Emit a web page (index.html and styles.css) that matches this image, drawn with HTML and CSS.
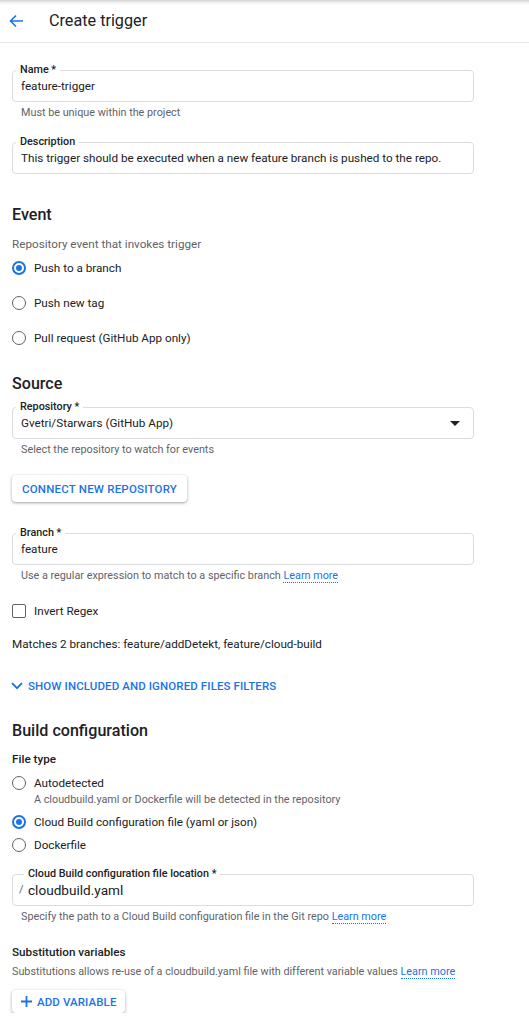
FILE: index.html
```html
<!DOCTYPE html>
<html lang="en">
<head>
<meta charset="utf-8">
<title>Create trigger</title>
<link rel="stylesheet" href="styles.css">
</head>
<body>
<header class="header">
  <svg class="back" viewBox="0 0 16 16" width="16" height="16" aria-hidden="true"><path d="M15 8H2.5M8 2.5 2.5 8 8 13.5" fill="none" stroke="#1a73e8" stroke-width="1.6"/></svg>
  <h1 class="title">Create trigger</h1>
</header>
<main class="form">
  <fieldset class="field f-name">
    <legend class="field-label">Name *</legend>
    <div class="field-value">feature-trigger</div>
  </fieldset>
  <div class="helper">Must be unique within the project</div>

  <fieldset class="field f-desc">
    <legend class="field-label">Description</legend>
    <div class="field-value">This trigger should be executed when a new feature branch is pushed to the repo.</div>
  </fieldset>

  <h2 class="section h-event">Event</h2>
  <p class="desc d-event">Repository event that invokes trigger</p>
  <div class="radio-list">
    <div class="radio-row"><span class="radio on"></span>Push to a branch</div>
    <div class="radio-row"><span class="radio"></span>Push new tag</div>
    <div class="radio-row"><span class="radio"></span>Pull request (GitHub App only)</div>
  </div>

  <h2 class="section h-source">Source</h2>
  <fieldset class="field f-repo">
    <legend class="field-label">Repository *</legend>
    <div class="field-value select">Gvetri/Starwars (GitHub App)<span class="caret"></span></div>
  </fieldset>
  <div class="helper">Select the repository to watch for events</div>
  <button class="btn btn-connect" type="button">CONNECT NEW REPOSITORY</button>

  <fieldset class="field f-branch">
    <legend class="field-label">Branch *</legend>
    <div class="field-value">feature</div>
  </fieldset>
  <div class="helper">Use a regular expression to match to a specific branch <a class="link" href="#">Learn more</a></div>
  <div class="check-row"><span class="checkbox"></span>Invert Regex</div>
  <p class="matches">Matches 2 branches: feature/addDetekt, feature/cloud-build</p>
  <div class="toggle">
    <svg class="chev" viewBox="0 0 12 8" width="12" height="8" aria-hidden="true"><path d="M1 1.2 6 6.2 11 1.2" fill="none" stroke="#1a73e8" stroke-width="1.9"/></svg>
    SHOW INCLUDED AND IGNORED FILES FILTERS
  </div>

  <h2 class="section h-build">Build configuration</h2>
  <div class="subhead h-filetype">File type</div>
  <div class="radio-row r-auto"><span class="radio"></span>Autodetected</div>
  <div class="radio-sub">A cloudbuild.yaml or Dockerfile will be detected in the repository</div>
  <div class="radio-row r-cloud"><span class="radio on"></span>Cloud Build configuration file (yaml or json)</div>
  <div class="radio-row r-docker"><span class="radio"></span>Dockerfile</div>

  <fieldset class="field f-loc">
    <legend class="field-label">Cloud Build configuration file location *</legend>
    <div class="field-value path"><span class="slash">/</span><span class="path-text">cloudbuild.yaml</span></div>
  </fieldset>
  <div class="helper">Specify the path to a Cloud Build configuration file in the Git repo <a class="link" href="#">Learn more</a></div>

  <div class="subhead h-subst">Substitution variables</div>
  <p class="desc d-subst">Substitutions allows re-use of a cloudbuild.yaml file with different variable values <a class="link" href="#">Learn more</a></p>
  <button class="btn btn-add" type="button">
    <svg class="plus" viewBox="0 0 11 11" width="11" height="11" aria-hidden="true"><path d="M5.5 0v11M0 5.5h11" stroke="#1a73e8" stroke-width="1.8"/></svg>
    ADD VARIABLE
  </button>
</main>
</body>
</html>
```

FILE: styles.css
```css
* { box-sizing: border-box; }

body {
  margin: 0;
  font-family: Roboto, "Noto Sans", "Liberation Sans", sans-serif;
  color: #202124;
  background: #fff;
}

.header {
  height: 43px;
  display: flex;
  align-items: center;
  padding-left: 8px;
  gap: 25px;
  border-bottom: 1px solid #e8e8e8;
  background: linear-gradient(to bottom, #d4d4d4 0, #f4f4f4 3px, #fff 5px);
}

.back { display: block; }

.title {
  margin: 0;
  font-size: 16.2px;
  font-weight: 400;
  line-height: 24px;
}

.form {
  width: 474px;
  padding: 21px 0 0 12px;
}

.field {
  margin: 0;
  border: 1px solid #dadce0;
  border-radius: 4px;
  padding: 0 7px 5px 3px;
  min-width: 0;
}

.field-label {
  padding: 0 4px;
  font-size: 10.8px;
  font-weight: 500;
  line-height: 12px;
}

.field-value {
  padding-left: 5px;
  font-size: 11.7px;
  line-height: 20px;
  white-space: nowrap;
}

.f-desc { margin-top: 15px; }
.f-repo { margin-top: 5px; }
.f-branch { margin-top: 25px; }
.f-loc { margin-top: 13px; padding-left: 11px; }

.select {
  display: flex;
  align-items: center;
  justify-content: space-between;
  padding-right: 6px;
}

.caret {
  width: 0;
  height: 0;
  border-left: 5px solid transparent;
  border-right: 5px solid transparent;
  border-top: 5px solid #202124;
}

.path {
  display: flex;
  align-items: center;
  padding-left: 0;
}

.slash {
  color: #5f6368;
  font-size: 11px;
  margin-left: -5px;
  width: 9px;
}

.path-text { font-size: 13.6px; }

.helper {
  margin-top: 3px;
  padding-left: 9px;
  font-size: 10.8px;
  line-height: 16px;
  color: #5f6368;
}

.link {
  color: #1a73e8;
  text-decoration: none;
  border-bottom: 1px dotted #1a73e8;
}

.section {
  margin: 0;
  font-size: 16.1px;
  font-weight: 500;
  line-height: 24px;
}

.h-event { margin-top: 29px; }
.h-source { margin-top: 22px; }
.h-build { margin-top: 23px; }

.desc {
  margin: 0;
  font-size: 11.7px;
  line-height: 18px;
  color: #5f6368;
}

.d-event { margin-top: 8px; }
.d-subst { margin-top: 2px; font-size: 10.8px; }

.radio-list {
  margin-top: 3px;
  display: flex;
  flex-direction: column;
  gap: 11px;
}

.radio-row {
  display: flex;
  align-items: center;
  gap: 8px;
  height: 24px;
  font-size: 11.7px;
}

.radio {
  width: 14px;
  height: 14px;
  border: 1.5px solid #5f6368;
  border-radius: 50%;
  flex: none;
  display: flex;
  align-items: center;
  justify-content: center;
}

.radio.on { border: 2px solid #1a73e8; }
.radio.on::after {
  content: "";
  width: 6px;
  height: 6px;
  border-radius: 50%;
  background: #1a73e8;
}

.btn {
  display: flex;
  align-items: center;
  border: 0;
  border-radius: 4px;
  background: #fff;
  box-shadow: 0 1px 2px rgba(60, 64, 67, 0.3), 0 1px 3px 1px rgba(60, 64, 67, 0.15);
  color: #1a73e8;
  font-family: inherit;
  font-size: 11.5px;
  font-weight: 500;
  letter-spacing: 0.2px;
  padding: 0 10px;
  white-space: nowrap;
}

.btn-connect {
  margin-top: 17px;
  height: 27px;
}

.btn-add {
  margin-top: 9px;
  height: 23px;
  gap: 5px;
  padding: 0 8px 0 9px;
  letter-spacing: 0.1px;
}

.plus { display: block; }

.check-row {
  margin-top: 15px;
  display: flex;
  align-items: center;
  gap: 8px;
  height: 24px;
  font-size: 11.7px;
}

.checkbox {
  width: 14px;
  height: 14px;
  border: 1.5px solid #5f6368;
  border-radius: 2px;
}

.matches {
  margin: 12px 0 0;
  font-size: 11.7px;
  line-height: 18px;
}

.toggle {
  margin-top: 23px;
  margin-left: -1px;
  display: flex;
  align-items: center;
  gap: 5px;
  height: 20px;
  color: #1a73e8;
  font-size: 11.5px;
  font-weight: 500;
  letter-spacing: 0.1px;
}

.chev { display: block; }

.subhead {
  font-size: 11.7px;
  font-weight: 500;
  line-height: 18px;
}

.h-filetype { margin-top: 7px; }
.h-subst { margin-top: 18px; }

.r-auto { margin-top: 5px; height: 20px; }
.radio-sub {
  padding-left: 22px;
  font-size: 10.8px;
  line-height: 14px;
  color: #5f6368;
}
.r-cloud { margin-top: 5px; height: 20px; }
.r-docker { margin-top: 3px; height: 20px; }
```
